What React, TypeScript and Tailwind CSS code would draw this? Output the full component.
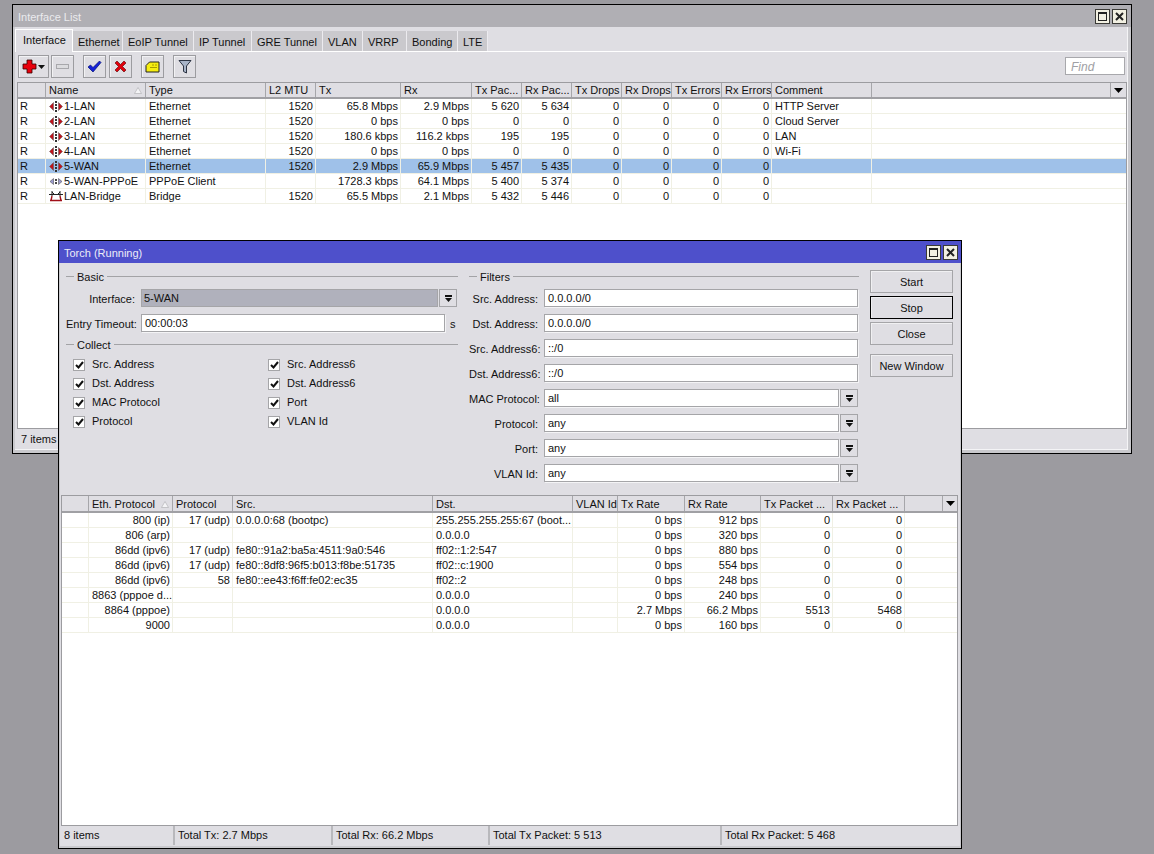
import React from 'react';

const DropArrow = () => (
  <svg width="7" height="7" viewBox="0 0 7 7">
    <rect x="0" y="0" width="7" height="2" fill="#111" />
    <path d="M0 3h7L3.5 7z" fill="#111" />
  </svg>
);

const IfaceIcon = ({ color = '#c0141c' }: { color?: string }) => (
  <svg width="14" height="11" viewBox="0 0 14 11" className="shrink-0">
    <path d="M0.5 5.5 4.5 1.5v8z" fill={color} stroke="#555" strokeWidth="0.5" />
    <path d="M13.5 5.5 9.5 1.5v8z" fill={color} stroke="#555" strokeWidth="0.5" />
    <rect x="6" y="0" width="2" height="2" fill="#333" />
    <rect x="6" y="3" width="2" height="2" fill="#333" />
    <rect x="6" y="6" width="2" height="2" fill="#333" />
    <rect x="6" y="9" width="2" height="2" fill="#333" />
  </svg>
);

const PppoeIcon = () => (
  <svg width="14" height="11" viewBox="0 0 14 11" className="shrink-0">
    <path d="M1 5.5 4.5 2.5v6z" fill="#9a9ad0" stroke="#555" strokeWidth="0.6" />
    <path d="M13 5.5 9.5 2.5v6z" fill="#9a9ad0" stroke="#555" strokeWidth="0.6" />
    <rect x="6" y="3" width="2" height="2" fill="#444" />
    <rect x="6" y="6" width="2" height="2" fill="#444" />
  </svg>
);

const BridgeIcon = () => (
  <svg width="14" height="12" viewBox="0 0 14 12" className="shrink-0">
    <path d="M0 4.5h14M3 1v5M11 1v5" stroke="#222" strokeWidth="1" />
    <path d="M3 2 6 5M11 2 8 5" stroke="#222" strokeWidth="1" />
    <path d="M1 10.5h12M2 10.5 3 6M12 10.5 11 6" stroke="#a01018" strokeWidth="1.4" />
  </svg>
);

const WinButtons = () => (
  <div className="flex gap-[2px]">
    <div className="w-[15px] h-[15px] bg-[#f2f0e2] border border-[#3a3a36] flex items-center justify-center">
      <div className="w-[9px] h-[9px] border border-[#222] border-t-2" />
    </div>
    <div className="w-[15px] h-[15px] bg-[#f2f0e2] border border-[#3a3a36] flex items-center justify-center">
      <svg width="9" height="9" viewBox="0 0 9 9">
        <path d="M1 1l7 7M8 1 1 8" stroke="#222" strokeWidth="2" />
      </svg>
    </div>
  </div>
);

const ToolBtn = ({ className, children }: { className: string; children?: React.ReactNode }) => (
  <div className={`h-[23px] flex items-center justify-center bg-[#dfdee3] border border-[#9c9ca0] shadow-[inset_1px_1px_0_#f2f2f4] ${className}`}>
    {children}
  </div>
);

const SortMark = () => (
  <svg width="8" height="7" viewBox="0 0 8 7" className="shrink-0">
    <path d="M4 0.5 7.5 6.5h-7z" fill="#f4f4f6" stroke="#b5b5b8" strokeWidth="0.7" />
  </svg>
);

const MenuArrow = () => (
  <svg width="9" height="5" viewBox="0 0 9 5">
    <path d="M0 0h9L4.5 5z" fill="#000" />
  </svg>
);

const headCell = 'h-full flex items-center px-[3px] border-r border-[#a6a6aa] whitespace-nowrap overflow-hidden';
const rowCell = 'h-full px-[3px] border-r border-[#f0f0e4] whitespace-nowrap overflow-hidden leading-[14px]';
const numCell = 'h-full pl-[3px] pr-[2px] text-right border-r border-[#f0f0e4] whitespace-nowrap overflow-hidden leading-[14px]';

type IfaceRow = { name: string; icon: React.ReactNode; type: string; mtu: string; tx: string; rx: string; txp: string; rxp: string; comment: string; selected?: boolean };

const ifaceRows: IfaceRow[] = [
  { name: '1-LAN', icon: <IfaceIcon />, type: 'Ethernet', mtu: '1520', tx: '65.8 Mbps', rx: '2.9 Mbps', txp: '5 620', rxp: '5 634', comment: 'HTTP Server' },
  { name: '2-LAN', icon: <IfaceIcon />, type: 'Ethernet', mtu: '1520', tx: '0 bps', rx: '0 bps', txp: '0', rxp: '0', comment: 'Cloud Server' },
  { name: '3-LAN', icon: <IfaceIcon />, type: 'Ethernet', mtu: '1520', tx: '180.6 kbps', rx: '116.2 kbps', txp: '195', rxp: '195', comment: 'LAN' },
  { name: '4-LAN', icon: <IfaceIcon />, type: 'Ethernet', mtu: '1520', tx: '0 bps', rx: '0 bps', txp: '0', rxp: '0', comment: 'Wi-Fi' },
  { name: '5-WAN', icon: <IfaceIcon />, type: 'Ethernet', mtu: '1520', tx: '2.9 Mbps', rx: '65.9 Mbps', txp: '5 457', rxp: '5 435', comment: '', selected: true },
  { name: '5-WAN-PPPoE', icon: <PppoeIcon />, type: 'PPPoE Client', mtu: '', tx: '1728.3 kbps', rx: '64.1 Mbps', txp: '5 400', rxp: '5 374', comment: '' },
  { name: 'LAN-Bridge', icon: <BridgeIcon />, type: 'Bridge', mtu: '1520', tx: '65.5 Mbps', rx: '2.1 Mbps', txp: '5 432', rxp: '5 446', comment: '' },
];

const ifaceGrid = 'grid grid-cols-[28px_100px_120px_50px_85px_71px_50px_50px_50px_50px_50px_50px_100px_239px_1fr]';
const torchGrid = 'grid grid-cols-[27px_84px_60px_200px_140px_45px_67px_76px_72px_72px_38px_1fr]';

const ifaceHead = ['', 'Name', 'Type', 'L2 MTU', 'Tx', 'Rx', 'Tx Pac...', 'Rx Pac...', 'Tx Drops', 'Rx Drops', 'Tx Errors', 'Rx Errors', 'Comment', ''];
const torchHead = ['', 'Eth. Protocol', 'Protocol', 'Src.', 'Dst.', 'VLAN Id', 'Tx Rate', 'Rx Rate', 'Tx Packet ...', 'Rx Packet ...', ''];

const torchRows = [
  ['800 (ip)', '17 (udp)', '0.0.0.0:68 (bootpc)', '255.255.255.255:67 (boot...', '0 bps', '912 bps', '0', '0'],
  ['806 (arp)', '', '', '0.0.0.0', '0 bps', '320 bps', '0', '0'],
  ['86dd (ipv6)', '17 (udp)', 'fe80::91a2:ba5a:4511:9a0:546', 'ff02::1:2:547', '0 bps', '880 bps', '0', '0'],
  ['86dd (ipv6)', '17 (udp)', 'fe80::8df8:96f5:b013:f8be:51735', 'ff02::c:1900', '0 bps', '554 bps', '0', '0'],
  ['86dd (ipv6)', '58', 'fe80::ee43:f6ff:fe02:ec35', 'ff02::2', '0 bps', '248 bps', '0', '0'],
  ['8863 (pppoe d...', '', '', '0.0.0.0', '0 bps', '240 bps', '0', '0'],
  ['8864 (pppoe)', '', '', '0.0.0.0', '2.7 Mbps', '66.2 Mbps', '5513', '5468'],
  ['9000', '', '', '0.0.0.0', '0 bps', '160 bps', '0', '0'],
];

const Legend = ({ label }: { label: string }) => (
  <div className="h-[14px] flex items-center gap-[3px]">
    <div className="w-[8px] h-px bg-[#a3a3a6]" />
    <span className="pt-[2px]">{label}</span>
    <div className="flex-1 h-px bg-[#a3a3a6]" />
  </div>
);

const fieldBox = 'h-[18px] border border-[#a5a5a8] bg-white px-[3px] pt-px flex items-center shadow-[1px_1px_0_#f4f4f6]';

const DropBtn = () => (
  <div className="w-[18px] h-[18px] border border-[#a5a5a8] bg-[#dfdee3] flex items-center justify-center ml-px">
    <DropArrow />
  </div>
);

const FilterRow = ({ label, value, drop }: { label: string; value: string; drop?: boolean }) => (
  <div className="flex items-center h-[18px]">
    <div className="w-[69px] pt-[2px] text-right whitespace-nowrap">{label}</div>
    <div className={`${fieldBox} ml-[6px] ${drop ? 'w-[295px]' : 'w-[314px]'}`}>{value}</div>
    {drop && <DropBtn />}
  </div>
);

const Check = ({ label }: { label: string }) => (
  <div className="h-[19px] flex items-center">
    <div className="w-[12px] h-[12px] bg-white border border-[#a5a5a8] flex items-center justify-center">
      <svg width="9" height="8" viewBox="0 0 9 8">
        <path d="M1 4l2.5 2.5L8 1" stroke="#111" strokeWidth="2" fill="none" />
      </svg>
    </div>
    <span className="ml-[7px]">{label}</span>
  </div>
);

const SideBtn = ({ label, className }: { label: string; className: string }) => (
  <div className={`h-[23px] pt-px flex items-center justify-center bg-[#dfdee3] border shadow-[inset_1px_1px_0_#f0f0f2] ${className}`}>{label}</div>
);

const InterfaceWindow = () => (
  <div className="absolute left-[12px] top-[4px] w-[1120px] h-[450px] border border-black bg-[#c9c9cd] flex flex-col">
    <div className="h-[22px] shrink-0 bg-[#b0afb4] flex items-center justify-between pl-[5px] pr-[4px] text-[#ebebee]">
      <span className="pt-[2px]">Interface List</span>
      <WinButtons />
    </div>
    <div className="flex-1 min-h-0 flex flex-col ml-[2px] mr-[3px] mb-[3px] bg-[#dfdee3] border-r border-b border-[#f4f4f6]">
      <div className="h-[25px] shrink-0 flex items-end border-b border-white">
        <div className="w-[58px] h-[23px] -mb-px bg-[#dfdee3] border-t border-l border-r border-white flex items-center pl-[7px] pb-[1px]">Interface</div>
        {[
          ['w-[50px]', 'Ethernet'],
          ['w-[71px]', 'EoIP Tunnel'],
          ['w-[58px]', 'IP Tunnel'],
          ['w-[71px]', 'GRE Tunnel'],
          ['w-[40px]', 'VLAN'],
          ['w-[44px]', 'VRRP'],
          ['w-[51px]', 'Bonding'],
          ['w-[30px]', 'LTE'],
        ].map(([w, label]) => (
          <div key={label} className={`${w} h-[20px] pt-[2px] bg-[#cac9cd] border-r border-[#ecebef] flex items-center pl-[5px]`}>{label}</div>
        ))}
      </div>
      <div className="h-[30px] shrink-0 flex items-start pt-[3px] pl-[3px]">
        <ToolBtn className="w-[31px] gap-[1px]">
          <svg width="15" height="15" viewBox="0 0 15 15">
            <path d="M5 1h5v4h4v5h-4v4H5v-4H1V5h4z" fill="#e8000c" stroke="#300" strokeWidth="0.8" />
          </svg>
          <svg width="7" height="4" viewBox="0 0 7 4"><path d="M0 0h7L3.5 4z" fill="#111" /></svg>
        </ToolBtn>
        <ToolBtn className="w-[23px] ml-[2px]">
          <div className="w-[13px] h-[5px] bg-[#dcdcdf] border border-[#a8a8ac]" />
        </ToolBtn>
        <ToolBtn className="w-[23px] ml-[9px]">
          <svg width="15" height="13" viewBox="0 0 15 13">
            <path d="M1 7l2.5-2L6 7.5 12.5 1 14 2.5 6 12z" fill="#1420d8" stroke="#001070" strokeWidth="0.7" />
          </svg>
        </ToolBtn>
        <ToolBtn className="w-[23px] ml-[3px]">
          <svg width="13" height="13" viewBox="0 0 13 13">
            <path d="M1 3l2-2 3.5 3.5L10 1l2 2-3.5 3.5L12 10l-2 2-3.5-3.5L3 12l-2-2 3.5-3.5z" fill="#e0000c" stroke="#500" strokeWidth="0.6" />
          </svg>
        </ToolBtn>
        <ToolBtn className="w-[23px] ml-[9px]">
          <svg width="15" height="12" viewBox="0 0 15 12">
            <path d="M4.5 1H14v10H1V4.5z" fill="#f6ee10" stroke="#222" strokeWidth="1" />
            <path d="M7 4h2M10 4h2M5 6.5h7" stroke="#a89c00" strokeWidth="1" />
          </svg>
        </ToolBtn>
        <ToolBtn className="w-[23px] ml-[9px]">
          <svg width="14" height="15" viewBox="0 0 14 15">
            <path d="M1 1.5h12L8.5 7v7l-3-1.5V7z" fill="#a8b4c8" stroke="#2c3444" strokeWidth="1" />
          </svg>
        </ToolBtn>
        <div className="ml-auto mr-[2px] mt-[2px] w-[60px] h-[18px] pt-[2px] bg-white border border-[#a8a8ac] flex items-center pl-[5px] italic text-[#a0a0a4] text-[12px]">Find</div>
      </div>
      <div className="flex-1 min-h-0 ml-[2px] flex flex-col bg-white border-t border-l border-b border-r border-[#9c9ca0]">
        <div className={`${ifaceGrid} h-[16px] shrink-0 bg-[#dfdee3] border-b-2 border-[#a0a0a4]`}>
          {ifaceHead.map((h, i) => (
            <div key={i} className={`${headCell} ${h === 'Name' ? 'justify-between' : ''}`}>
              <span>{h}</span>
              {h === 'Name' && <SortMark />}
            </div>
          ))}
          <div className="h-full flex items-center justify-center"><MenuArrow /></div>
        </div>
        {ifaceRows.map((r) => (
          <div key={r.name} className={`${ifaceGrid} h-[15px] shrink-0 border-b border-[#f0f0e4] ${r.selected ? 'bg-[#9fc1e9]' : ''}`}>
            <div className={`${rowCell} pl-[2px]`}>R</div>
            <div className={`${rowCell} flex items-center gap-px pl-[3px]`}>{r.icon}<span>{r.name}</span></div>
            <div className={rowCell}>{r.type}</div>
            <div className={numCell}>{r.mtu}</div>
            <div className={numCell}>{r.tx}</div>
            <div className={numCell}>{r.rx}</div>
            <div className={numCell}>{r.txp}</div>
            <div className={numCell}>{r.rxp}</div>
            <div className={numCell}>0</div>
            <div className={numCell}>0</div>
            <div className={numCell}>0</div>
            <div className={numCell}>0</div>
            <div className={rowCell}>{r.comment}</div>
          </div>
        ))}
      </div>
      <div className="h-[20px] shrink-0 flex items-center pl-[6px]">7 items</div>
    </div>
  </div>
);

const TorchWindow = () => (
  <div className="absolute left-[58px] top-[240px] w-[904px] h-[609px] border border-black bg-[#c9c9cd] flex flex-col">
    <div className="h-[22px] shrink-0 bg-[#4e50cb] flex items-center justify-between pl-[5px] pr-[3px] text-[#ececf8]">
      <span className="pt-[3px]">Torch (Running)</span>
      <WinButtons />
    </div>
    <div className="flex-1 min-h-0 flex flex-col mx-px mb-[2px] bg-[#dfdee3]">
      <div className="h-[232px] shrink-0 flex pl-[6px] pt-[6px]">
        <div className="w-[392px]">
          <Legend label="Basic" />
          <div className="mt-[6px] flex items-center h-[18px]">
            <div className="w-[69px] pt-[2px] text-right">Interface:</div>
            <div className="ml-[6px] w-[297px] h-[18px] border border-[#a5a5a8] bg-[#b0b1bc] px-[2px] pt-px flex items-center">5-WAN</div>
            <DropBtn />
          </div>
          <div className="mt-[7px] flex items-center h-[18px]">
            <div className="w-[69px] pt-[2px] text-right whitespace-nowrap">Entry Timeout:</div>
            <div className={`${fieldBox} ml-[6px] w-[304px]`}>00:00:03</div>
            <span className="ml-[5px] pt-[2px]">s</span>
          </div>
          <div className="mt-[5px]"><Legend label="Collect" /></div>
          <div className="mt-[4px] ml-[7px] grid grid-cols-[195px_1fr]">
            {['Src. Address', 'Src. Address6', 'Dst. Address', 'Dst. Address6', 'MAC Protocol', 'Port', 'Protocol', 'VLAN Id'].map((c) => (
              <Check key={c} label={c} />
            ))}
          </div>
        </div>
        <div className="w-[390px] ml-[11px]">
          <Legend label="Filters" />
          <div className="mt-[6px] flex flex-col gap-[7px]">
            <FilterRow label="Src. Address:" value="0.0.0.0/0" />
            <FilterRow label="Dst. Address:" value="0.0.0.0/0" />
            <FilterRow label="Src. Address6:" value="::/0" />
            <FilterRow label="Dst. Address6:" value="::/0" />
            <FilterRow label="MAC Protocol:" value="all" drop />
            <FilterRow label="Protocol:" value="any" drop />
            <FilterRow label="Port:" value="any" drop />
            <FilterRow label="VLAN Id:" value="any" drop />
          </div>
        </div>
        <div className="w-[83px] ml-[11px] mt-px flex flex-col">
          <SideBtn label="Start" className="border-[#a5a5a8]" />
          <SideBtn label="Stop" className="border-black mt-[3px]" />
          <SideBtn label="Close" className="border-[#a5a5a8] mt-[3px]" />
          <SideBtn label="New Window" className="border-[#a5a5a8] mt-[9px]" />
        </div>
      </div>
      <div className="flex-1 min-h-0 ml-px mr-[2px] flex flex-col bg-white border border-[#9c9ca0]">
        <div className={`${torchGrid} h-[17px] shrink-0 bg-[#dfdee3] border-b-2 border-[#a0a0a4]`}>
          {torchHead.map((h, i) => (
            <div key={i} className={`${headCell} pt-[2px] ${h === 'Eth. Protocol' ? 'justify-between' : ''}`}>
              <span>{h}</span>
              {h === 'Eth. Protocol' && <SortMark />}
            </div>
          ))}
          <div className="h-full flex items-center justify-center"><MenuArrow /></div>
        </div>
        {torchRows.map((r, i) => (
          <div key={i} className={`${torchGrid} h-[15px] shrink-0 border-b border-[#f0f0e4]`}>
            <div className={rowCell} />
            <div className={numCell}>{r[0]}</div>
            <div className={numCell}>{r[1]}</div>
            <div className={rowCell}>{r[2]}</div>
            <div className={rowCell}>{r[3]}</div>
            <div className={rowCell} />
            <div className={numCell}>{r[4]}</div>
            <div className={numCell}>{r[5]}</div>
            <div className={numCell}>{r[6]}</div>
            <div className={numCell}>{r[7]}</div>
          </div>
        ))}
      </div>
      <div className="h-[20px] shrink-0 ml-px mr-[2px] flex">
        {[
          ['w-[114px] border-r-2', '8 items'],
          ['w-[158px] border-r-2', 'Total Tx: 2.7 Mbps'],
          ['w-[157px] border-r-2', 'Total Rx: 66.2 Mbps'],
          ['w-[232px] border-r-2', 'Total Tx Packet: 5 513'],
          ['flex-1', 'Total Rx Packet: 5 468'],
        ].map(([w, label]) => (
          <div key={label} className={`${w} h-[19px] flex items-center pl-[3px] border-[#b8b8bc]`}>{label}</div>
        ))}
      </div>
    </div>
  </div>
);

const App: React.FC = () => (
  <div className="relative w-[1154px] h-[854px] overflow-hidden bg-[#9c9ba0] font-['Liberation_Sans',sans-serif] text-[11px] leading-none text-[#111]">
    <InterfaceWindow />
    <TorchWindow />
  </div>
);

export default App;
